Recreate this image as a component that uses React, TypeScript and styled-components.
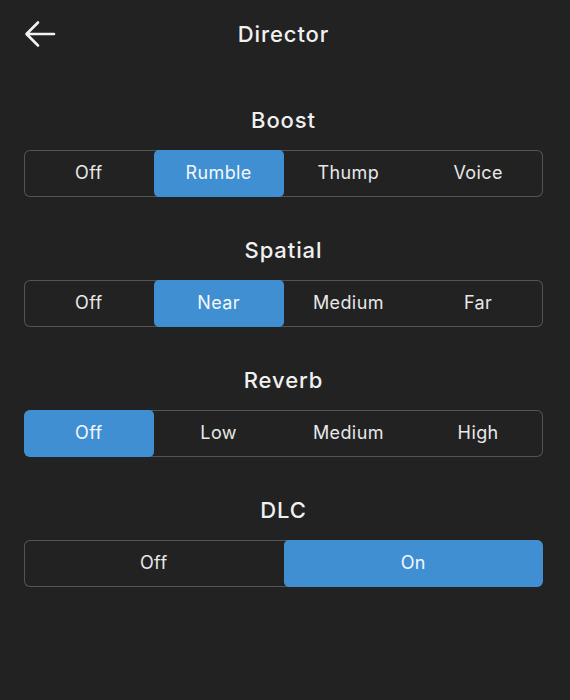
import React, { useState } from "react";
import styled, { createGlobalStyle } from "styled-components";

const GlobalStyle = createGlobalStyle`
  html, body {
    margin: 0;
    padding: 0;
    background: #222222;
  }
  body {
    font-family: Inter, "Noto Sans", "Liberation Sans", sans-serif;
    color: #ececec;
  }
`;

const Page = styled.div`
  min-height: 700px;
  background: #222222;
  display: flex;
  flex-direction: column;
`;

const Header = styled.header`
  position: relative;
  height: 68px;
  display: flex;
  align-items: center;
  justify-content: center;
`;

const BackButton = styled.button`
  position: absolute;
  left: 22px;
  top: 19px;
  width: 36px;
  height: 30px;
  padding: 0;
  border: none;
  background: none;
  display: flex;
  align-items: center;
  justify-content: center;
  cursor: pointer;
`;

const Title = styled.h1`
  margin: 0 3px 0 0;
  font-size: 22px;
  font-weight: 500;
  letter-spacing: 0.9px;
  color: #f0f0f0;
`;

const Content = styled.main`
  display: flex;
  flex-direction: column;
  gap: 38px;
  padding: 37px 27px 0 24px;
`;

const Section = styled.section`
  display: flex;
  flex-direction: column;
  gap: 15px;
`;

const SectionTitle = styled.h2`
  margin: 0;
  height: 30px;
  line-height: 30px;
  text-align: center;
  font-size: 22px;
  font-weight: 500;
  letter-spacing: 0.9px;
  color: #f0f0f0;
`;

const Segmented = styled.div`
  display: flex;
  height: 47px;
  border-radius: 6px;
  box-shadow: inset 0 0 0 1px #545454;
  overflow: hidden;
`;

const Segment = styled.button<{ $active: boolean }>`
  flex: 1;
  border: none;
  margin: 0;
  padding: 0 0 2px;
  border-radius: 5px;
  font-family: inherit;
  font-size: 18px;
  font-weight: 400;
  letter-spacing: 0.4px;
  color: ${(p) => (p.$active ? "#f4f8fc" : "#e8e8e8")};
  background: ${(p) => (p.$active ? "#3f8fd2" : "transparent")};
  cursor: pointer;
`;

const groups = [
  { name: "Boost", options: ["Off", "Rumble", "Thump", "Voice"], initial: 1 },
  { name: "Spatial", options: ["Off", "Near", "Medium", "Far"], initial: 1 },
  { name: "Reverb", options: ["Off", "Low", "Medium", "High"], initial: 0 },
  { name: "DLC", options: ["Off", "On"], initial: 1 },
];

const ArrowIcon = () => (
  <svg width="32" height="28" viewBox="0 0 32 28" fill="none">
    <path
      d="M30 14H3M14 2.5L2.5 14L14 25.5"
      stroke="#f2f2f2"
      strokeWidth="2.6"
      strokeLinecap="round"
      strokeLinejoin="round"
    />
  </svg>
);

const SettingGroup = ({ name, options, initial }: { name: string; options: string[]; initial: number }) => {
  const [selected, setSelected] = useState(initial);
  return (
    <Section>
      <SectionTitle>{name}</SectionTitle>
      <Segmented>
        {options.map((opt, i) => (
          <Segment key={opt} $active={i === selected} onClick={() => setSelected(i)}>
            {opt}
          </Segment>
        ))}
      </Segmented>
    </Section>
  );
};

export default function App() {
  return (
    <Page>
      <GlobalStyle />
      <Header>
        <BackButton aria-label="Back">
          <ArrowIcon />
        </BackButton>
        <Title>Director</Title>
      </Header>
      <Content>
        {groups.map((g) => (
          <SettingGroup key={g.name} {...g} />
        ))}
      </Content>
    </Page>
  );
}
